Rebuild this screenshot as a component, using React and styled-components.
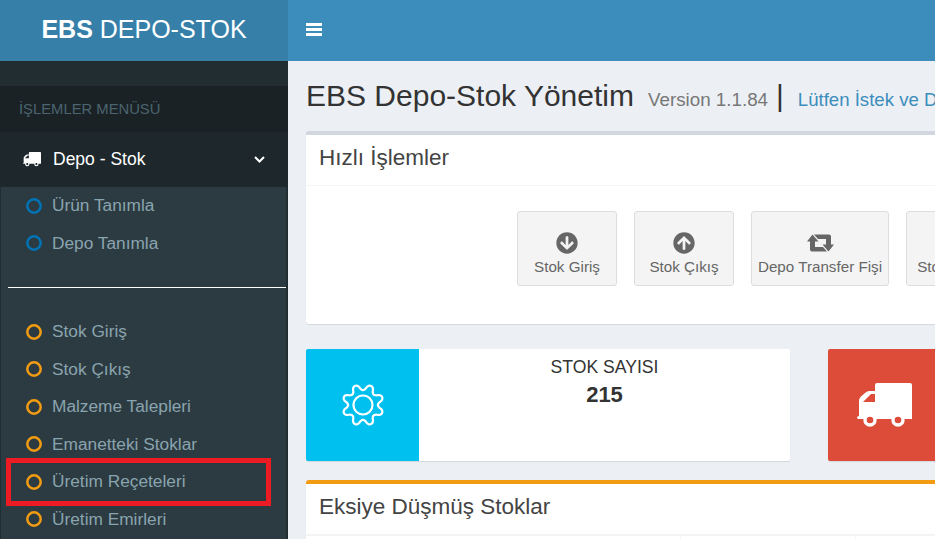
import React from 'react';
import styled, { createGlobalStyle } from 'styled-components';
import { FaArrowCircleDown, FaArrowCircleUp, FaList } from 'react-icons/fa';

const Global = createGlobalStyle`
  html, body { margin: 0; padding: 0; width: 935px; height: 539px; overflow: hidden; background: #ecf0f5; }
  body { font-family: "Liberation Sans", Arial, sans-serif; font-size: 14px; color: #333; }
  * { box-sizing: border-box; }
`;

const Page = styled.div`
  width: 935px; height: 539px; overflow: hidden; display: flex; flex-direction: column;
`;
const Header = styled.header`
  height: 61px; flex: none; display: flex; background: #3c8dbc;
`;
const Logo = styled.div`
  width: 288px; flex: none; background: #367fa9; color: #fff; font-size: 25px; padding-bottom: 2px;
  display: flex; align-items: center; justify-content: center; white-space: pre;
  b { font-weight: 700; }
`;
const Toggle = styled.div`
  display: flex; align-items: center; padding: 0 0 3px 18px; color: #fff;
`;
const Body = styled.div`
  flex: 1; min-height: 0; display: flex;
`;
const Sidebar = styled.aside`
  width: 288px; flex: none; background: #222d32; padding-top: 25px;
`;
const MenuHeader = styled.div`
  height: 46px; background: #1a2226; color: #4b646f; font-size: 14.8px; padding-left: 19px;
  display: flex; align-items: center;
`;
const ActiveItem = styled.div`
  height: 55px; background: #1e282c; color: #fff; display: flex; align-items: center;
  padding: 0 23px 0 23px;
`;
const ActiveLabel = styled.span`
  margin-left: 12px; flex: 1; font-size: 17.5px;
`;
const Tree = styled.div`
  margin: 0 2px 0 1px; background: #2c3b41; height: 400px;
`;
const TreeItem = styled.div`
  position: relative; height: 37.5px; display: flex; align-items: center; padding-left: 25px;
  color: #8aa4af; font-size: 17.3px; white-space: nowrap;
  svg { color: ${p => p.$color}; margin-right: 10px; flex: none; }
`;
const Divider = styled.hr`
  margin: 25px 0 25px 7px; border: 0; border-top: 1px solid #fff;
`;
const Highlight = styled.div`
  position: absolute; left: 5px; right: 15px; top: -5.5px; bottom: -5px; border: 5px solid #ed1c24;
`;
const Main = styled.main`
  flex: 1; min-width: 0; overflow: hidden; padding: 0 0 0 18px;
`;
const TitleRow = styled.div`
  height: 70px; display: flex; align-items: baseline; white-space: nowrap; padding: 18px 0 0 0;
`;
const Title = styled.h1`
  margin: 0; font-size: 30px; font-weight: 400; color: #333;
`;
const Version = styled.small`
  margin-left: 14px; font-size: 18.8px; color: #777;
`;
const Sep = styled.span`
  margin: 0 14px 0 8px; font-size: 30px; color: #333;
`;
const Link = styled.a`
  font-size: 18.6px; color: #3c8dbc;
`;
const Box = styled.section`
  width: 1040px; background: #fff; border-radius: 3px; border-top: 4px solid ${p => p.$color};
  box-shadow: 0 1px 1px rgba(0,0,0,.1);
`;
const BoxHeader = styled.div`
  height: ${p => 50 + p.$rule}px; display: flex; align-items: center; padding: 0 0 4px 13px; font-size: 22.5px; color: #444;
  border-bottom: ${p => p.$rule}px solid #f4f4f4;
`;
const Actions = styled.div`
  display: flex; gap: 17px; padding: 25px 0 38px 211px;
`;
const Action = styled.div`
  width: ${p => p.$w}px; height: 75px; flex: none; background: #f4f4f4; border: 1px solid #ddd; border-radius: 3px;
  color: #666; font-size: 15.2px; display: flex; flex-direction: column; align-items: center; justify-content: flex-start;
  padding-top: 20px; white-space: nowrap;
  svg { font-size: 22px; height: 22px; margin-bottom: 4px; flex: none; }
`;
const Stats = styled.div`
  display: flex; gap: 38px; margin: 25px 0 19px;
`;
const Stat = styled.div`
  width: 484px; height: 112px; flex: none; background: #fff; border-radius: 2px; display: flex; overflow: hidden;
  box-shadow: 0 1px 1px rgba(0,0,0,.1);
`;
const StatIcon = styled.div`
  width: 113px; flex: none; background: ${p => p.$bg}; color: #fff; display: flex; align-items: center; justify-content: center;
`;
const StatBody = styled.div`
  flex: 1; text-align: center; padding-top: 8px; color: #333;
`;
const StatLabel = styled.div`
  font-size: 17.6px; line-height: 20px;
`;
const StatValue = styled.div`
  font-size: 22px; font-weight: 700; line-height: 26px; margin-top: 5px;
`;
const TableHead = styled.div`
  display: flex; height: 10px;
`;
const Cell = styled.div`
  width: ${p => p.$w}px; flex: none; border-right: 1px solid #f4f4f4;
`;

const gearPath = (() => {
  const pts = [];
  for (let i = 0; i < 240; i++) {
    const a = (i / 240) * Math.PI * 2;
    const w = -Math.cos(8 * a);
    const shaped = Math.sign(w) * Math.pow(Math.abs(w), 0.7);
    const r = 17.8 + 2.9 * shaped;
    pts.push(`${(22 + r * Math.cos(a)).toFixed(2)} ${(22 + r * Math.sin(a)).toFixed(2)}`);
  }
  return `M${pts.join('L')}Z`;
})();

const Gear = () => (
  <svg width="44" height="44" viewBox="0 0 44 44" fill="none" stroke="currentColor" strokeWidth="2.2">
    <path d={gearPath} strokeLinejoin="round" />
    <circle cx="22" cy="22" r="9.5" />
  </svg>
);

const Truck = ({ width, hole }) => (
  <svg width={width} viewBox="0 0 55 44" fill="currentColor">
    <path fillRule="evenodd" d="M18 2 Q18 0 20 0 H53 Q55 0 55 2 V36 H1.5 Q0 36 0 34.5 Q0 33 2 33 V18 Q2 15.5 4 13.5 L8 10 Q10 8 12.5 8 H18 Z M18 11 H14 L6 19 H18 Z" />
    <circle cx="13" cy="37" r="5" fill={hole} stroke="currentColor" strokeWidth="3.4" />
    <circle cx="41" cy="37" r="5" fill={hole} stroke="currentColor" strokeWidth="3.4" />
  </svg>
);

const Bars = () => (
  <svg width="16" height="13" viewBox="0 0 16 13" fill="currentColor">
    <rect width="16" height="3" />
    <rect y="5" width="16" height="3" />
    <rect y="10" width="16" height="3" />
  </svg>
);

const Chevron = () => (
  <svg width="11" height="7" viewBox="0 0 11 7" fill="none" stroke="#fff" strokeWidth="2">
    <path d="M1 1 L5.5 5.5 L10 1" />
  </svg>
);

const Ring = () => (
  <svg width="16" height="16" viewBox="0 0 16 16" fill="none" stroke="currentColor" strokeWidth="2.5">
    <circle cx="8" cy="8" r="6.7" />
  </svg>
);

const Retweet = () => (
  <svg width="27" viewBox="0 -2.5 27 22" fill="currentColor">
    <path d="M5.5 0 L11.5 7 H8 V12.5 H16 L20 17 H5 Q3 17 3 15 V7 H0 Z" />
    <path d="M21.5 17 L15.5 10 H19 V4.5 H11 L7 0 H22 Q24 0 24 2 V10 H27 Z" />
  </svg>
);

const top = ['Ürün Tanımla', 'Depo Tanımla'];
const rest = ['Stok Giriş', 'Stok Çıkış', 'Malzeme Talepleri', 'Emanetteki Stoklar', 'Üretim Reçeteleri', 'Üretim Emirleri'];

export default function App() {
  return (
    <Page>
      <Global />
      <Header>
        <Logo><b>EBS</b> DEPO-STOK</Logo>
        <Toggle><Bars /></Toggle>
      </Header>
      <Body>
        <Sidebar>
          <MenuHeader>İŞLEMLER MENÜSÜ</MenuHeader>
          <ActiveItem>
            <Truck width={18} hole="#1e282c" />
            <ActiveLabel>Depo - Stok</ActiveLabel>
            <Chevron />
          </ActiveItem>
          <Tree>
            {top.map(t => <TreeItem key={t} $color="#0073b7"><Ring />{t}</TreeItem>)}
            <Divider />
            {rest.map(t => (
              <TreeItem key={t} $color="#f39c12">
                <Ring />{t}
                {t === 'Üretim Reçeteleri' && <Highlight />}
              </TreeItem>
            ))}
          </Tree>
        </Sidebar>
        <Main>
          <TitleRow>
            <Title>EBS Depo-Stok Yönetim</Title>
            <Version>Version 1.1.84</Version>
            <Sep>|</Sep>
            <Link>Lütfen İstek ve Düşüncelerinizi Bildiriniz</Link>
          </TitleRow>
          <Box $color="#d2d6de">
            <BoxHeader $rule={1}>Hızlı İşlemler</BoxHeader>
            <Actions>
              <Action $w={100}><FaArrowCircleDown />Stok Giriş</Action>
              <Action $w={100}><FaArrowCircleUp />Stok Çıkış</Action>
              <Action $w={138}><Retweet />Depo Transfer Fişi</Action>
              <Action $w={100}><FaList />Stok Sayım</Action>
            </Actions>
          </Box>
          <Stats>
            <Stat>
              <StatIcon $bg="#00c0ef"><Gear /></StatIcon>
              <StatBody><StatLabel>STOK SAYISI</StatLabel><StatValue>215</StatValue></StatBody>
            </Stat>
            <Stat>
              <StatIcon $bg="#dd4b39"><Truck width={55} hole="#dd4b39" /></StatIcon>
              <StatBody />
            </Stat>
          </Stats>
          <Box $color="#f39c12">
            <BoxHeader $rule={2}>Eksiye Düşmüş Stoklar</BoxHeader>
            <TableHead><Cell $w={375} /><Cell $w={175} /><Cell $w={200} /></TableHead>
          </Box>
        </Main>
      </Body>
    </Page>
  );
}
